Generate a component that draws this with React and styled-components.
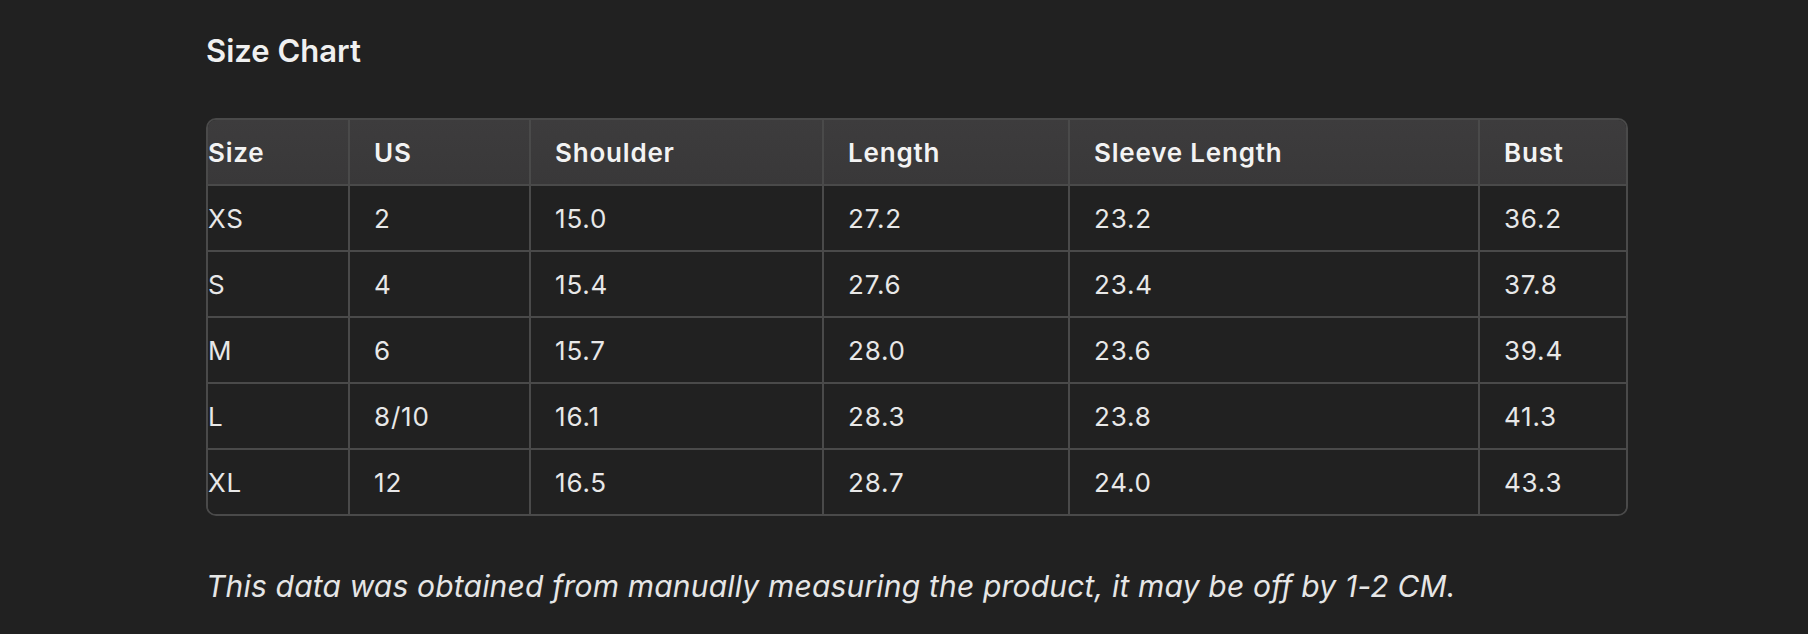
import React from "react";
import styled, { createGlobalStyle } from "styled-components";

const GlobalStyle = createGlobalStyle`
  html, body {
    margin: 0;
    background: #212121;
  }
  body {
    font-family: Inter, "Noto Sans", "Liberation Sans", sans-serif;
    color: #ececec;
  }
`;

const Page = styled.div`
  padding: 32px 180px 40px 206px;
  display: flex;
  flex-direction: column;
`;

const Title = styled.h2`
  margin: 0 0 48px;
  font-size: 31px;
  line-height: 1.24;
  font-weight: 600;
  color: #f0f0f0;
`;

const TableWrap = styled.div`
  width: 1422px;
  border: 2px solid #4a4a4a;
  border-radius: 10px;
  overflow: hidden;
  box-sizing: border-box;
`;

const Table = styled.table`
  width: 100%;
  table-layout: fixed;
  border-collapse: collapse;
  font-size: 26px;
  letter-spacing: 0.8px;
`;

const Th = styled.th`
  height: 64px;
  padding: 0 0 0 ${(p) => (p.$first ? 0 : 24)}px;
  text-align: left;
  font-weight: 600;
  color: #f3f3f3;
  background: linear-gradient(180deg, #3d3c3d 0%, #393839 100%);
  border-bottom: 2px solid #4a4a4a;
  border-right: ${(p) => (p.$last ? "none" : "2px solid #4a4a4a")};
`;

const Td = styled.td`
  height: 64px;
  padding: 0 0 0 ${(p) => (p.$first ? 0 : 24)}px;
  font-weight: 400;
  color: #e8e8e8;
  background: #212121;
  border-bottom: ${(p) => (p.$bottom ? "none" : "2px solid #4a4a4a")};
  border-right: ${(p) => (p.$last ? "none" : "2px solid #4a4a4a")};
`;

const Note = styled.p`
  margin: 52px 0 0;
  font-size: 30px;
  line-height: 1.2;
  letter-spacing: 0.18px;
  font-style: italic;
  color: #e6e6e6;
`;

const widths = [141, 181, 293, 246, 410, 151];
const headers = ["Size", "US", "Shoulder", "Length", "Sleeve Length", "Bust"];
const rows = [
  ["XS", "2", "15.0", "27.2", "23.2", "36.2"],
  ["S", "4", "15.4", "27.6", "23.4", "37.8"],
  ["M", "6", "15.7", "28.0", "23.6", "39.4"],
  ["L", "8/10", "16.1", "28.3", "23.8", "41.3"],
  ["XL", "12", "16.5", "28.7", "24.0", "43.3"],
];

export default function App() {
  return (
    <>
      <GlobalStyle />
      <Page>
        <Title>Size Chart</Title>
        <TableWrap>
          <Table>
            <colgroup>
              {widths.map((w, i) => (
                <col key={i} style={{ width: w }} />
              ))}
            </colgroup>
            <thead>
              <tr>
                {headers.map((h, i) => (
                  <Th key={h} $first={i === 0} $last={i === headers.length - 1}>
                    {h}
                  </Th>
                ))}
              </tr>
            </thead>
            <tbody>
              {rows.map((r, ri) => (
                <tr key={r[0]}>
                  {r.map((c, i) => (
                    <Td
                      key={i}
                      $first={i === 0}
                      $last={i === r.length - 1}
                      $bottom={ri === rows.length - 1}
                    >
                      {c}
                    </Td>
                  ))}
                </tr>
              ))}
            </tbody>
          </Table>
        </TableWrap>
        <Note>
          This data was obtained from manually measuring the product, it may be
          off by 1-2 CM.
        </Note>
      </Page>
    </>
  );
}
